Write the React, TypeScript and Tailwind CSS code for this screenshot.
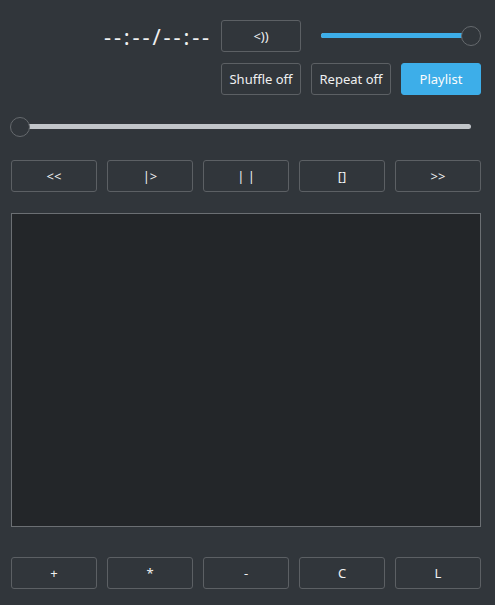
import React from 'react';

const font = { fontFamily: '"Noto Sans", "Open Sans", sans-serif' };

const Btn: React.FC<{ label: string; active?: boolean }> = ({ label, active }) => (
  <button
    className={`h-[32px] w-full rounded-[3px] border text-[13px] leading-none ${
      active
        ? 'border-[#3daee9] bg-[#3daee9] text-[#fcfcfc]'
        : 'border-[#5c6064] bg-[#31363b] text-[#eff0f1]'
    }`}
  >
    {label}
  </button>
);

const Slider: React.FC<{ value: number; fill: string }> = ({ value, fill }) => (
  <div className="relative h-[20px] w-full">
    <div className="absolute left-[10px] right-[10px] top-[7px] h-[5px] rounded-full bg-[#c1c5c9]">
      <div className="h-full rounded-full" style={{ width: `${value}%`, background: fill }} />
    </div>
    <div
      className="absolute top-0 h-[20px] w-[20px] rounded-full border border-[#666a6e] bg-[#31363b]"
      style={{ left: `calc(${value / 100} * (100% - 20px))` }}
    />
  </div>
);

export default function App() {
  const controls = ['<<', '|>', '| |', '[]', '>>'];
  const tools = ['+', '*', '-', 'C', 'L'];

  return (
    <div className="h-[605px] w-[495px] bg-[#31363b] pl-[11px] pr-[14px] pt-[20px] text-[#eff0f1]" style={font}>
      <div className="grid grid-cols-[1fr_80px_80px_80px] gap-x-[10px] gap-y-[11px]">
        <div className="flex h-[32px] items-center justify-end">
          <span className="-mr-[1px] text-[22px] tracking-[2.85px]">--:--/--:--</span>
        </div>
        <Btn label="<))" />
        <div className="col-span-2 flex items-center">
          <Slider value={100} fill="#3daee9" />
        </div>
        <div />
        <Btn label="Shuffle off" />
        <Btn label="Repeat off" />
        <Btn label="Playlist" active />
      </div>

      <div className="-ml-[1px] mt-[22px]">
        <Slider value={0} fill="#3daee9" />
      </div>

      <div className="mt-[23px] grid grid-cols-5 gap-x-[10px]">
        {controls.map((c) => (
          <Btn key={c} label={c} />
        ))}
      </div>

      <div className="mt-[21px] h-[314px] border border-[#6b6f73] bg-[#232629]" />

      <div className="mt-[30px] grid grid-cols-5 gap-x-[10px]">
        {tools.map((c) => (
          <Btn key={c} label={c} />
        ))}
      </div>
    </div>
  );
}
